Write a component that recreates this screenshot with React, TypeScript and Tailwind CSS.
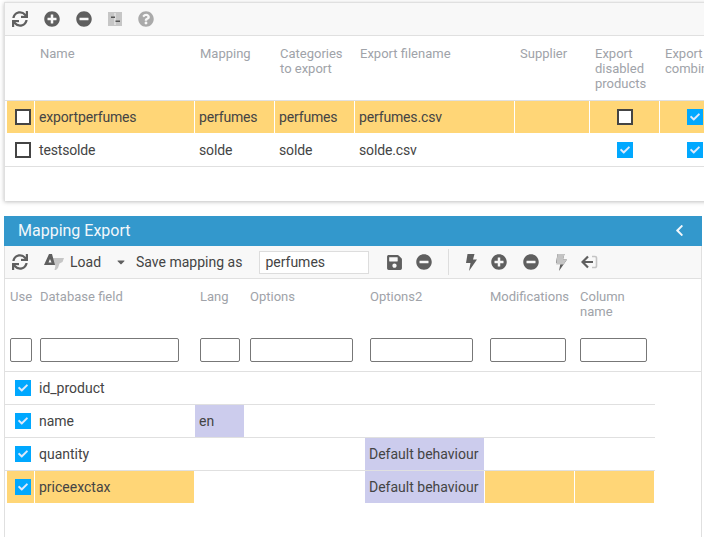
import React from "react";
import { FaSync, FaPlusCircle, FaMinusCircle, FaQuestionCircle, FaSave, FaCheck, FaChevronLeft, FaCaretDown } from "react-icons/fa";

const Check: React.FC<{ on: boolean }> = ({ on }) =>
  on ? (
    <span className="flex h-4 w-4 items-center justify-center bg-[#00a8ff] text-[#dfe9fb]">
      <FaCheck size={10} />
    </span>
  ) : (
    <span className="block h-4 w-4 border-2 border-[#444] bg-white" />
  );

const Bolt: React.FC<{ disabled?: boolean }> = ({ disabled }) => (
  <svg width="12" height="17" viewBox="0 0 12 17" className="block">
    <path d="M2.500 0h7L8 5.500h4L4 17l1.500-8H1z" fill="#5f5f5f" />
    {disabled && <path d="M2.500 0h7L8 5.500h4l-3.500 5H1.200z" fill="#c4c4c4" />}
  </svg>
);

const ColumnsIcon = () => (
  <svg width="14" height="14" viewBox="0 0 14 14" className="block">
    <rect width="14" height="14" fill="#c6c6c6" />
    <path d="M6.500 1h1v12h-1z" fill="#f4f4f4" />
    <path d="M3 4.500h4v1.500H3zM7.500 8.500H12V10H7.500z" fill="#555" />
  </svg>
);

const LoadIcon = () => (
  <svg width="20" height="16" viewBox="0 0 20 16" className="block">
    <path d="M9 4h11l-1.500 4-3 1.500L14 14l-2 2h-1.500l1-4.500L8 10z" fill="#c6c6c6" />
    <path fillRule="evenodd" d="M5 0h3l3 11H0zM6 5L4.500 8.500h3z" fill="#5f5f5f" />
  </svg>
);

const SignInIcon = () => (
  <svg width="17" height="14" viewBox="0 0 17 14" className="block">
    <path d="M11 1.500h3a1.500 1.500 0 0 1 1.500 1.500v8a1.500 1.500 0 0 1-1.500 1.500h-3" fill="none" stroke="#c4c4c4" strokeWidth="1.600" />
    <path d="M7 1.500L1.500 7 7 12.500M2 7h10" fill="none" stroke="#5f5f5f" strokeWidth="2.200" />
  </svg>
);

const topColumns = [
  { width: "w-[28px]", label: [] },
  { width: "w-[160px]", label: ["Name"] },
  { width: "w-[80px]", label: ["Mapping"] },
  { width: "w-[80px]", label: ["Categories", "to export"] },
  { width: "w-[160px]", label: ["Export filename"] },
  { width: "w-[75px]", label: ["Supplier"] },
  { width: "w-[70px]", label: ["Export", "disabled", "products"] },
  { width: "w-[70px]", label: ["Export", "combinations"] },
];

const exportsData = [
  { name: "exportperfumes", mapping: "perfumes", categories: "perfumes", file: "perfumes.csv", disabled: false, selected: true },
  { name: "testsolde", mapping: "solde", categories: "solde", file: "solde.csv", disabled: true, selected: false },
];

const mappingColumns = [
  { width: "w-[28px]", label: ["Use"], pad: "pl-[3px]", input: "w-[22px]" },
  { width: "w-[160px]", label: ["Database field"], pad: "pl-[5px]", input: "w-[139px]" },
  { width: "w-[50px]", label: ["Lang"], pad: "pl-[5px]", input: "w-[40px]" },
  { width: "w-[120px]", label: ["Options"], pad: "pl-[5px]", input: "w-[103px]" },
  { width: "w-[120px]", label: ["Options2"], pad: "pl-[5px]", input: "w-[103px]" },
  { width: "w-[90px]", label: ["Modifications"], pad: "pl-[5px]", input: "w-[76px]" },
  { width: "w-[80px]", label: ["Column", "name"], pad: "pl-[5px]", input: "w-[67px]" },
];

const mappingRows = [
  { field: "id_product", lang: "", options2: "", selected: false },
  { field: "name", lang: "en", options2: "", selected: false },
  { field: "quantity", lang: "", options2: "Default behaviour", selected: false },
  { field: "priceexctax", lang: "", options2: "Default behaviour", selected: true },
];

const box = "flex h-[32px] shrink-0 items-center border-r border-white";
const cell = `${box} pl-[4px]`;

export default function App() {
  return (
    <div className="h-[537px] w-[704px] overflow-hidden bg-white pl-[4px] pt-[2px] font-['Roboto',sans-serif] text-[14px] leading-[15px] text-[#444]">
      {/* Export list */}
      <div className="h-[199px] w-[720px] border-l border-t border-[#e0e0e0] shadow-[0_1px_4px_rgba(0,0,0,0.25)]">
        <div className="flex h-[33px] items-center gap-[16px] border-b border-[#e0e0e0] bg-[#f8f8f8] pl-[7px] text-[#5f5f5f]">
          <FaSync size={16} />
          <FaPlusCircle size={16} />
          <FaMinusCircle size={16} />
          <ColumnsIcon />
          <FaQuestionCircle size={16} className="text-[#aaa]" />
        </div>
        <div className="flex h-[65px] border-b border-[#e0e0e0] pl-[2px] pt-[10px] text-[13px] text-[#a0a3a9]">
          {topColumns.map((col, i) => (
            <div key={i} className={`${col.width} shrink-0 whitespace-nowrap pl-[5px]`}>
              {col.label.map((line) => (
                <div key={line}>{line}</div>
              ))}
            </div>
          ))}
        </div>
        {exportsData.map((row) => {
          const bg = row.selected ? "bg-[#ffd677]" : "";
          return (
            <div
              key={row.name}
              className={`flex border-b pl-[2px] tracking-[-0.15px] ${row.selected ? "border-white" : "border-[#e0e0e0]"}`}
            >
              <div className={`${box} w-[28px] pl-[8px] ${bg}`}>
                <Check on={false} />
              </div>
              <div className={`${cell} w-[160px] ${bg}`}>{row.name}</div>
              <div className={`${cell} w-[80px] ${bg}`}>{row.mapping}</div>
              <div className={`${cell} w-[80px] ${bg}`}>{row.categories}</div>
              <div className={`${cell} w-[160px] ${bg}`}>{row.file}</div>
              <div className={`${cell} w-[75px] ${bg}`} />
              <div className={`${box} w-[70px] pl-[27px] ${bg}`}>
                <Check on={row.disabled} />
              </div>
              <div className={`${box} w-[70px] pl-[27px] ${bg}`}>
                <Check on={true} />
              </div>
            </div>
          );
        })}
      </div>

      {/* Mapping panel */}
      <div className="mt-[15px] h-[321px] w-[698px] border-r border-l border-[#e0e0e0]">
        <div className="-ml-px flex h-[30px] w-[698px] items-center justify-between bg-[#3398cc] pb-[2px] pl-[14px] pr-[16px] text-[16px] text-[#f2f7fb]">
          <span>Mapping Export</span>
          <FaChevronLeft size={13} />
        </div>
        <div className="flex h-[33px] items-center border-b border-[#e0e0e0] bg-[#f8f8f8] pl-[7px] text-[#5f5f5f]">
          <FaSync size={16} />
          <span className="ml-[16px]">
            <LoadIcon />
          </span>
          <span className="ml-[6px] text-[#444]">Load</span>
          <FaCaretDown size={12} className="ml-[14px]" />
          <span className="ml-[9px] text-[#444]">Save mapping as</span>
          <input
            readOnly
            value="perfumes"
            className="ml-[17px] h-[23px] w-[110px] border border-[#ddd] bg-white pl-[5px] text-[#444] outline-none"
          />
          <FaSave size={17} className="ml-[17px]" />
          <FaMinusCircle size={16} className="ml-[13px]" />
          <span className="ml-[16px] h-[26px] w-px bg-[#ddd]" />
          <span className="ml-[16px]">
            <Bolt />
          </span>
          <FaPlusCircle size={16} className="ml-[14px]" />
          <FaMinusCircle size={16} className="ml-[16px]" />
          <span className="ml-[16px]">
            <Bolt disabled />
          </span>
          <span className="ml-[14px]">
            <SignInIcon />
          </span>
        </div>

        <div className="flex h-[93px] border-b border-[#e0e0e0] pl-[2px] text-[13px] text-[#a0a3a9]">
          {mappingColumns.map((col) => (
            <div key={col.label[0]} className={`${col.width} ${col.pad} flex shrink-0 flex-col pt-[10px]`}>
              <div className="h-[49px] whitespace-nowrap">
                {col.label.map((line) => (
                  <div key={line}>{line}</div>
                ))}
              </div>
              <input readOnly className={`${col.input} h-[24px] rounded-[2px] border border-[#777] bg-white`} />
            </div>
          ))}
        </div>

        {mappingRows.map((row) => {
          const bg = row.selected ? "bg-[#ffd677]" : "";
          return (
            <div
              key={row.field}
              className={`flex w-[650px] border-b pl-[2px] ${row.selected ? "border-white" : "border-[#e0e0e0]"}`}
            >
              <div className={`${box} w-[28px] pl-[8px] ${bg}`}>
                <Check on={true} />
              </div>
              <div className={`${cell} w-[160px] ${bg}`}>{row.field}</div>
              <div className={`${cell} w-[50px] ${row.lang ? "bg-[#cccced]" : ""}`}>{row.lang}</div>
              <div className={`${cell} w-[120px]`} />
              <div className={`${cell} w-[120px] ${row.options2 ? "bg-[#cccced]" : ""}`}>{row.options2}</div>
              <div className={`${cell} w-[90px] ${bg}`} />
              <div className={`${cell} w-[80px] ${bg}`} />
            </div>
          );
        })}
      </div>
    </div>
  );
}
